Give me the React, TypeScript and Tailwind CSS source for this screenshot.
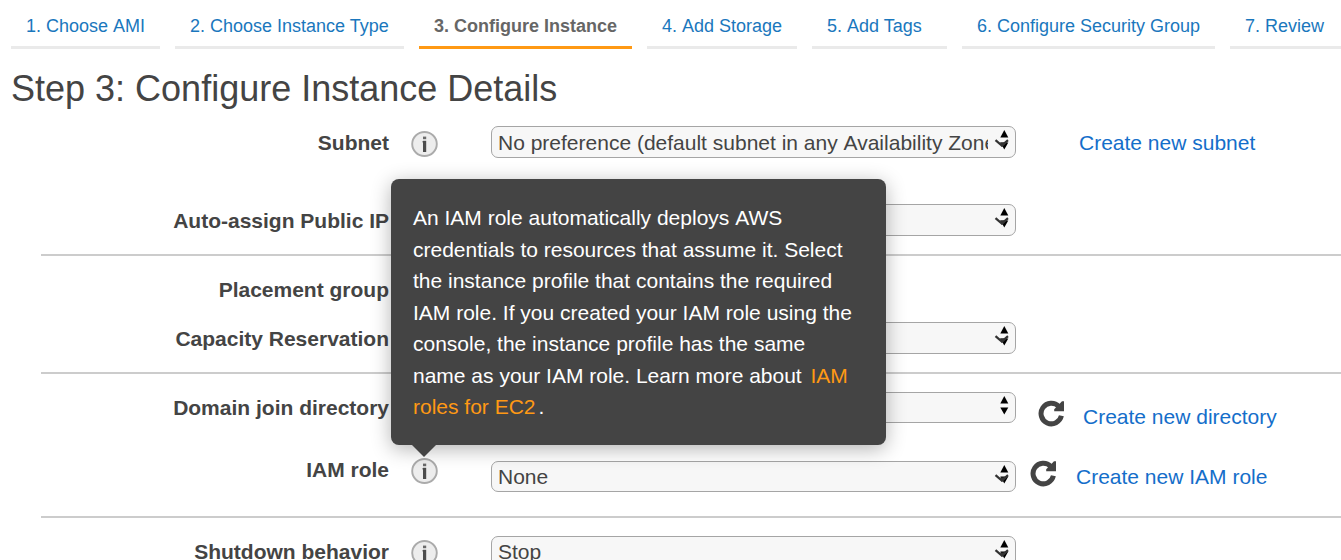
import React from "react";

const TABS = [
  { label: "1. Choose AMI", width: "w-[149px]" },
  { label: "2. Choose Instance Type", width: "w-[229px]" },
  { label: "3. Configure Instance", width: "w-[213px]", active: true },
  { label: "4. Add Storage", width: "w-[150px]" },
  { label: "5. Add Tags", width: "w-[135px]" },
  { label: "6. Configure Security Group", width: "w-[253px]" },
  { label: "7. Review", width: "w-[149px]" },
];

// Words starting with "A" get their own box so the preceding space is not kerned.
function Unkerned({ text }: { text: string }) {
  return (
    <>
      {text.split(/( A\w+)/).map((part, i) =>
        part.startsWith(" A") ? (
          <React.Fragment key={i}>
            {" "}
            <span className="inline-block">{part.slice(1)}</span>
          </React.Fragment>
        ) : (
          part
        ),
      )}
    </>
  );
}

function InfoIcon() {
  return (
    <svg width="27" height="26" viewBox="0 0 27 26" className="block">
      <ellipse cx="13.5" cy="13" rx="12.3" ry="12" fill="#ededed" stroke="#ababab" strokeWidth="1.9" />
      <rect x="12" y="5.6" width="3.2" height="2.6" fill="#6a6a6a" />
      <rect x="12" y="9.8" width="3.2" height="11.2" fill="#4c4c4c" />
      <rect x="11" y="10" width="1" height="1.5" fill="#aaa" />
    </svg>
  );
}

function RefreshIcon() {
  return (
    <svg width="27" height="27" viewBox="0 0 27 27" className="block shrink-0">
      <path d="M20.8 6.4A10.3 10.3 0 1 0 23.4 15.8" fill="none" stroke="#444" strokeWidth="5" />
      <path d="M26 1.2V11.2H16.2V9.2L24 1.2Z" fill="#444" />
    </svg>
  );
}

function SelectArrows({ chevron, tall }: { chevron: boolean; tall: boolean }) {
  return (
    <svg width="24" height="22" viewBox="0 0 24 22" className="block shrink-0">
      <path d="M12.3 7.5L16.3 0L20.3 7.5Z" fill="#000" />
      <path d={tall ? "M12.3 12.5H20.3L16.3 19.5Z" : "M12.3 11.6H20.3L16.3 18.6Z"} fill="#000" />
      {chevron && (
        <>
          <path d="M12 12.5H19L14 17Z" fill="#333" />
          <path d="M7.5 10.2L13.8 15.6L20 10.2" fill="none" stroke="#333" strokeWidth="2.2" />
        </>
      )}
    </svg>
  );
}

interface SelectProps {
  value?: string;
  height?: string;
  textTop?: string;
  chevron?: boolean;
  tall?: boolean;
}

function Select({ value = "", height = "h-8", textTop = "mt-1", chevron = true, tall = true }: SelectProps) {
  return (
    <div className={`flex w-[525px] shrink-0 items-start rounded-[7px] border border-[#a5a5a5] bg-[#f7f7f7] pl-1.5 ${height}`}>
      <span className={`h-6 w-[490px] shrink-0 overflow-hidden whitespace-nowrap leading-6 ${textTop}`}>
        <Unkerned text={value} />
      </span>
      <span className="mt-[3px] block">
        <SelectArrows chevron={chevron} tall={tall} />
      </span>
    </div>
  );
}

interface RowProps {
  label: string;
  height: string;
  labelPad?: string;
  info?: boolean;
  children?: React.ReactNode;
}

function Row({ label, height, labelPad = "pt-[5px]", info = false, children }: RowProps) {
  return (
    <div className={`flex items-start ${height}`}>
      <div className={`w-[389px] shrink-0 text-right font-bold leading-6 ${labelPad}`}>{label}</div>
      <div className={`ml-[22px] w-20 shrink-0 ${labelPad}`}>{info && <InfoIcon />}</div>
      {children}
    </div>
  );
}

function Divider() {
  return <div className="ml-[41px] h-0.5 bg-[#ccc]" />;
}

function Link({ children, className }: { children: React.ReactNode; className: string }) {
  return <a className={`whitespace-nowrap leading-6 text-[#146eca] ${className}`}>{children}</a>;
}

function Tooltip() {
  return (
    <div className="absolute left-[391px] top-[179px] z-10 h-[266px] w-[495px] rounded-lg bg-[#444] pl-[22px] pt-[23px] leading-[31.5px] text-white shadow-[0_4px_20px_rgba(0,0,0,0.3)]">
      <p className="w-[445px]">
        <Unkerned text="An IAM role automatically deploys AWS credentials to resources that assume it. Select the instance profile that contains the required IAM role. If you created your IAM role using the console, the instance profile has the same name as your IAM role. Learn more about " />
        <a className="px-[3px] text-[#ff9914]">IAM roles for EC2</a>.
      </p>
      <svg width="26" height="12" viewBox="0 0 26 12" className="absolute left-5 top-[266px]">
        <path d="M1 0H25L13 12Z" fill="#444" />
      </svg>
    </div>
  );
}

export default function App() {
  return (
    <div className="relative h-[560px] w-[1341px] overflow-hidden bg-white font-['Liberation_Sans',Arial,sans-serif] text-[21px] text-[#444]">
      <nav className="flex h-[49px] gap-[15px] pl-[11px] text-lg leading-5">
        {TABS.map((tab) => (
          <a
            key={tab.label}
            className={`shrink-0 whitespace-nowrap border-b-[3px] pl-[15px] pt-4 ${tab.width} ${
              tab.active ? "border-[#ff9914] font-bold text-[#666]" : "border-[#eaeaea] text-[#1a77bd]"
            }`}
          >
            <Unkerned text={tab.label} />
          </a>
        ))}
      </nav>
      <h1 className="h-[77px] pl-[11px] pt-5 text-4xl leading-10">Step 3: Configure Instance Details</h1>

      <Row label="Subnet" height="h-[78px]" info>
        <Select value="No preference (default subnet in any Availability Zone)" />
        <Link className="ml-[63px] mt-[5px]">Create new subnet</Link>
      </Row>
      <Row label="Auto-assign Public IP" height="h-[50px]">
        <Select />
      </Row>
      <Divider />
      <Row label="Placement group" height="h-[66px]" labelPad="pt-[22px]" />
      <Row label="Capacity Reservation" height="h-[50px]">
        <Select />
      </Row>
      <Divider />
      <div className="pt-[18px]">
        <Row label="Domain join directory" height="h-[66px]" labelPad="pt-1">
          <Select height="h-[31px]" chevron={false} tall={false} />
          <div className="ml-[22px] flex pt-2">
            <RefreshIcon />
            <Link className="ml-[18px] mt-[5px]">Create new directory</Link>
          </div>
        </Row>
        <Row label="IAM role" height="h-[58px]" labelPad="pt-0" info>
          <div className="pt-[3px]">
            <Select value="None" height="h-[31px]" textTop="mt-[3px]" tall={false} />
          </div>
          <div className="ml-[14px] flex pt-[2px]">
            <RefreshIcon />
            <Link className="ml-[19px] mt-[5px]">Create new IAM role</Link>
          </div>
        </Row>
      </div>
      <Divider />
      <div className="pt-[18px]">
        <Row label="Shutdown behavior" height="h-10" labelPad="pt-1" info>
          <Select value="Stop" textTop="mt-[3px]" tall={false} />
        </Row>
      </div>
      <Tooltip />
    </div>
  );
}
